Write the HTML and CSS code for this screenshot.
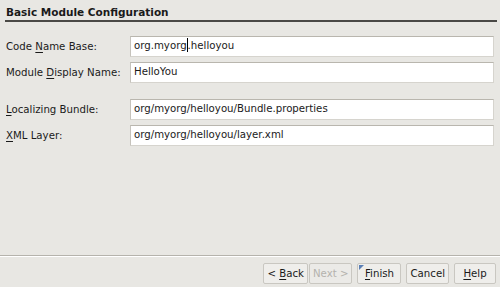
FILE: index.html
```html
<!DOCTYPE html>
<html lang="en">

<head>
    <meta charset="utf-8">
    <title>Basic Module Configuration</title>
    <link rel="stylesheet" href="styles.css">
</head>

<body>
    <div class="wizard">
        <div class="panel">
            <div class="title">Basic Module Configuration</div>

            <div class="form">
                <label class="label">Code <u>N</u>ame Base:</label>
                <div class="field">org.myorg<span class="caret"></span>.helloyou</div>

                <label class="label">Module <u>D</u>isplay Name:</label>
                <div class="field">HelloYou</div>

                <div class="gap"></div>

                <label class="label"><u>L</u>ocalizing Bundle:</label>
                <div class="field">org/myorg/helloyou/Bundle.properties</div>

                <label class="label"><u>X</u>ML Layer:</label>
                <div class="field">org/myorg/helloyou/layer.xml</div>
            </div>
        </div>

        <div class="buttons">
            <button class="btn back">&lt; <u>B</u>ack</button>
            <button class="btn next" disabled>Next &gt;</button>
            <button class="btn default"><u>F</u>inish</button>
            <button class="btn">Cancel</button>
            <button class="btn"><u>H</u>elp</button>
        </div>
    </div>
</body>

</html>
```

FILE: styles.css
```css
body {
    margin: 0;
    background-color: #e8e7e3;
    font-family: "DejaVu Sans", sans-serif;
    font-size: 10.2px;
    color: #1a1a1a;
}

.wizard {
    display: flex;
    flex-direction: column;
    height: 100vh;
}

.panel {
    flex: 1;
    padding: 5px 3px 0 5px;
}

.title {
    font-weight: bold;
    font-size: 10.5px;
    line-height: 14px;
    padding: 0 0 1px 1px;
    border-bottom: 2px solid #4a4946;
}

.form {
    display: grid;
    grid-template-columns: 125px 1fr;
    row-gap: 5px;
    margin-top: 14px;
    padding-right: 3px;
}

.label {
    display: block;
    line-height: 21px;
    padding-left: 1px;
    white-space: nowrap;
}

.label u,
.btn u {
    text-decoration-thickness: 1px;
    text-underline-offset: 2px;
}

.field {
    height: 21px;
    box-sizing: border-box;
    line-height: 18px;
    padding-left: 3px;
    background-color: #ffffff;
    border: 1px solid #d6d4ce;
    border-top-color: #b9b6ae;
    border-left-color: #c6c3bc;
    white-space: nowrap;
    overflow: hidden;
}

.caret {
    display: inline-block;
    width: 1px;
    height: 14px;
    background-color: #000;
    vertical-align: -3px;
}

.gap {
    grid-column: 1 / 3;
    height: 6px;
}

.buttons {
    display: flex;
    justify-content: flex-end;
    gap: 5px;
    padding: 7px 4px 3px 0;
    border-top: 1px solid #b5b3ac;
    box-shadow: inset 0 1px 0 #ffffff;
}

.btn {
    font-family: "DejaVu Sans", sans-serif;
    font-size: 10.2px;
    color: #1a1a1a;
    height: 21px;
    min-width: 42px;
    padding: 0 3px;
    background-color: #efeeeb;
    border: 1px solid #c9c7c1;
    border-radius: 2px;
    position: relative;
}

.back {
    margin-right: -4px;
}

.btn:disabled {
    color: #b4b2ad;
    background-color: #ebeae7;
}

.default {
    min-width: 44px;
}

.default::before {
    content: "";
    position: absolute;
    left: 1px;
    top: 1px;
    border-top: 5px solid #5b7fb5;
    border-right: 5px solid transparent;
}
```
